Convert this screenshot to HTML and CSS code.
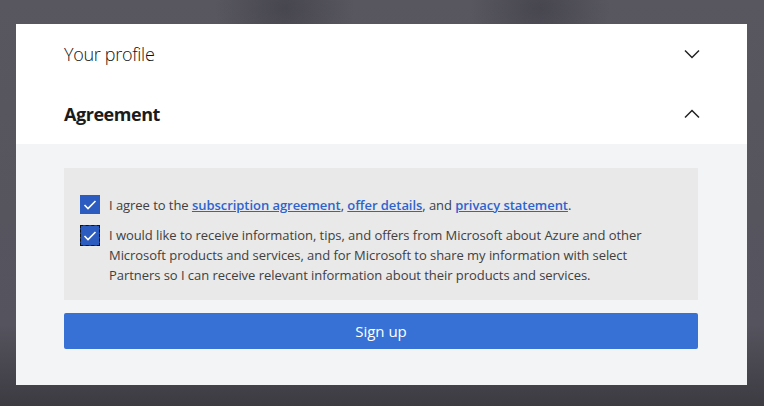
FILE: index.html
```html
<!DOCTYPE html>
<html lang="en">
<head>
<meta charset="utf-8">
<title>Sign up</title>
<link rel="stylesheet" href="styles.css">
</head>
<body>
<div class="backdrop">
  <section class="card">
    <div class="head">
      <div class="row">
        <span class="title light">Your profile</span>
        <svg class="chev" width="16" height="10" viewBox="0 0 16 10"><polyline points="1,1.5 8,8.5 15,1.5" fill="none" stroke="#222" stroke-width="1.5"/></svg>
      </div>
      <div class="row">
        <span class="title bold">Agreement</span>
        <svg class="chev" width="16" height="10" viewBox="0 0 16 10"><polyline points="1,8.5 8,1.5 15,8.5" fill="none" stroke="#222" stroke-width="1.5"/></svg>
      </div>
    </div>
    <div class="body">
      <div class="panel">
        <label class="check">
          <span class="box"><svg width="14" height="12" viewBox="0 0 14 12"><polyline points="1.5,6 5,9.5 12.5,2" fill="none" stroke="#fff" stroke-width="1.6"/></svg></span>
          <span class="txt">I agree to the <a href="#">subscription agreement</a>, <a href="#">offer details</a>, and <a href="#">privacy statement</a>.</span>
        </label>
        <label class="check">
          <span class="box focus"><svg width="14" height="12" viewBox="0 0 14 12"><polyline points="1.5,6 5,9.5 12.5,2" fill="none" stroke="#fff" stroke-width="1.6"/></svg></span>
          <span class="txt">I would like to receive information, tips, and offers from Microsoft about Azure and other Microsoft products and services, and for Microsoft to share my information with select Partners so I can receive relevant information about their products and services.</span>
        </label>
      </div>
      <button class="btn">Sign up</button>
    </div>
  </section>
</div>
</body>
</html>
```
FILE: styles.css
```css
html, body {
  margin: 0;
  padding: 0;
}
body {
  font-family: "Open Sans", "Noto Sans", sans-serif;
}
.backdrop {
  width: 764px;
  height: 406px;
  box-sizing: border-box;
  padding: 24px 17px 0 16px;
  background:
    radial-gradient(ellipse 70px 60px at 285px 8px, rgba(40,40,50,0.35), transparent),
    radial-gradient(ellipse 70px 60px at 540px 8px, rgba(40,40,50,0.35), transparent),
    linear-gradient(to bottom, #58575f 0%, #55545e 80%, #3c3b42 100%);
}
.card {
  width: 731px;
  height: 361px;
  background: #f3f4f6;
  display: flex;
  flex-direction: column;
}
.head {
  background: #fff;
  padding: 0 48px;
}
.row {
  height: 60px;
  display: flex;
  align-items: center;
  justify-content: space-between;
}
.title {
  font-size: 18px;
  color: #1b1b1b;
}
.light {
  font-weight: 300;
  letter-spacing: -0.3px;
  color: #111;
}
.bold {
  font-weight: 700;
  letter-spacing: -0.45px;
}
.chev {
  display: block;
  margin-right: -1px;
}
.body {
  padding: 24px 49px 0 48px;
  display: flex;
  flex-direction: column;
}
.panel {
  background: #e9e9e9;
  padding: 27px 16px 15px;
  display: flex;
  flex-direction: column;
  gap: 10px;
}
.check {
  display: flex;
  align-items: flex-start;
  gap: 9px;
}
.box {
  flex: none;
  width: 20px;
  height: 19px;
  background: #2c5cbf;
  display: flex;
  align-items: center;
  justify-content: center;
  box-sizing: border-box;
}
.box.focus {
  height: 21px;
  outline: 1px dashed #111;
  outline-offset: -1px;
  border: 1px solid #1a3f8a;
}
.txt {
  font-size: 13px;
  line-height: 20px;
  color: #404040;
  letter-spacing: -0.05px;
  padding-right: 24px;
}
.txt a {
  color: #2f63cc;
  font-weight: 600;
  text-decoration: underline;
}
.btn {
  margin-top: 13px;
  height: 36px;
  border: none;
  border-radius: 2px;
  background: #3771d6;
  color: #fff;
  font-family: "Open Sans", "Noto Sans", sans-serif;
  font-size: 15px;
  cursor: pointer;
}
```
